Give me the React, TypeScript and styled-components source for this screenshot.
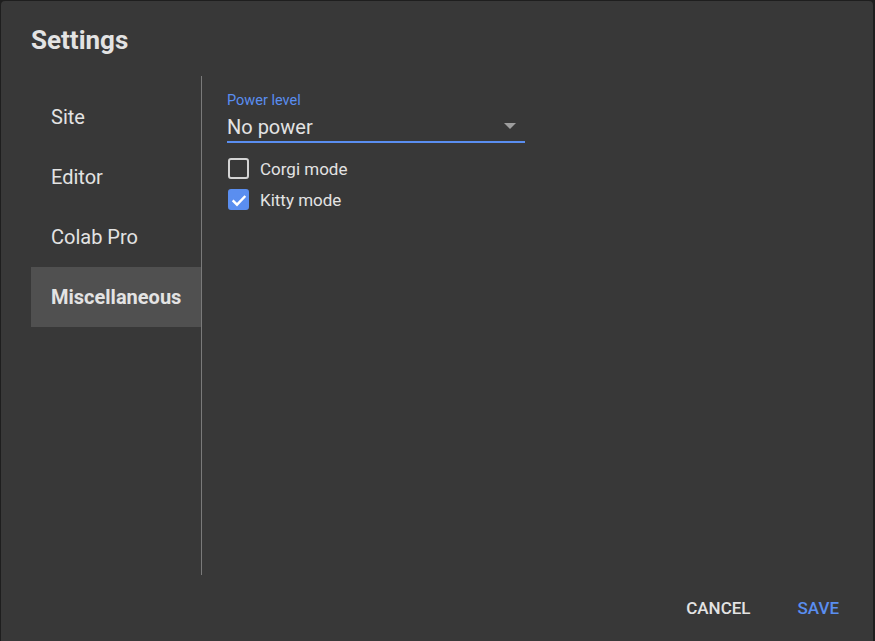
import React from 'react'
import styled, { createGlobalStyle } from 'styled-components'

const GlobalStyle = createGlobalStyle`
  html, body {
    margin: 0;
    padding: 0;
    height: 641px;
    overflow: hidden;
    background: #1e1e1e;
  }
  body {
    font-family: Roboto, 'Liberation Sans', Arial, sans-serif;
    color: #e3e3e3;
  }
`

const Dialog = styled.div`
  margin: 1px 2px 0 1px;
  height: 640px;
  background: #383838;
  border-radius: 4px 4px 0 0;
  display: flex;
  flex-direction: column;
`

const Title = styled.h2`
  margin: 0;
  padding: 23px 30px 0;
  font-size: 26px;
  line-height: 32px;
  font-weight: 700;
  color: #e3e3e3;
`

const Body = styled.div`
  margin-top: 20px;
  height: 499px;
  display: flex;
`

const Sidebar = styled.nav`
  width: 170px;
  margin-left: 30px;
  padding-top: 11px;
  border-right: 1px solid #7a7a7a;
  display: flex;
  flex-direction: column;
`

const NavItem = styled.div<{ $active?: boolean }>`
  height: 60px;
  padding-left: 20px;
  display: flex;
  align-items: center;
  font-size: 20px;
  font-weight: ${p => (p.$active ? 700 : 400)};
  background: ${p => (p.$active ? '#505050' : 'transparent')};
  color: #e3e3e3;
`

const Content = styled.div`
  padding: 16px 25px;
  display: flex;
  flex-direction: column;
`

const Field = styled.div`
  width: 298px;
  display: flex;
  flex-direction: column;
  margin-bottom: 10px;
`

const FieldLabel = styled.label`
  font-size: 14.5px;
  line-height: 17px;
  color: #5a8ef0;
`

const Select = styled.div`
  height: 28px;
  padding-top: 4px;
  display: flex;
  align-items: center;
  justify-content: space-between;
  font-size: 20px;
  border-bottom: 2px solid #5a8ef0;
`

const Arrow = styled.span`
  width: 0;
  height: 0;
  margin: 0 9px 2px 0;
  border-left: 6px solid transparent;
  border-right: 6px solid transparent;
  border-top: 6px solid #9e9e9e;
`

const CheckRow = styled.div`
  height: 31px;
  display: flex;
  align-items: center;
  gap: 11px;
  font-size: 17px;
  padding-left: 1px;
`

const Box = styled.span<{ $checked?: boolean }>`
  width: 21px;
  height: 21px;
  box-sizing: border-box;
  border-radius: 3px;
  border: 2px solid ${p => (p.$checked ? '#5a8ef0' : '#d4d4d4')};
  background: ${p => (p.$checked ? '#5a8ef0' : 'transparent')};
  display: flex;
  align-items: center;
  justify-content: center;
`

const Footer = styled.div`
  height: 66px;
  display: flex;
  align-items: center;
  justify-content: flex-end;
  padding-right: 26px;
  gap: 31px;
`

const Button = styled.button<{ $primary?: boolean }>`
  background: none;
  border: none;
  padding: 0 8px;
  font-family: Roboto, 'Liberation Sans', Arial, sans-serif;
  font-size: 17px;
  font-weight: 500;
  text-transform: uppercase;
  color: ${p => (p.$primary ? '#5a8ef0' : '#e3e3e3')};
`

function Checkbox({ checked, label }: { checked?: boolean; label: string }) {
  return (
    <CheckRow>
      <Box $checked={checked}>
        {checked && (
          <svg width="16" height="16" viewBox="0 0 24 24">
            <path d="M2.5 12.5 L9 19 L21.5 6" fill="none" stroke="#fff" strokeWidth="3.6" />
          </svg>
        )}
      </Box>
      {label}
    </CheckRow>
  )
}

export default function App() {
  return (
    <>
      <GlobalStyle />
      <Dialog>
        <Title>Settings</Title>
        <Body>
          <Sidebar>
            <NavItem>Site</NavItem>
            <NavItem>Editor</NavItem>
            <NavItem>Colab Pro</NavItem>
            <NavItem $active>Miscellaneous</NavItem>
          </Sidebar>
          <Content>
            <Field>
              <FieldLabel>Power level</FieldLabel>
              <Select>
                No power
                <Arrow />
              </Select>
            </Field>
            <Checkbox label="Corgi mode" />
            <Checkbox checked label="Kitty mode" />
          </Content>
        </Body>
        <Footer>
          <Button>Cancel</Button>
          <Button $primary>Save</Button>
        </Footer>
      </Dialog>
    </>
  )
}
